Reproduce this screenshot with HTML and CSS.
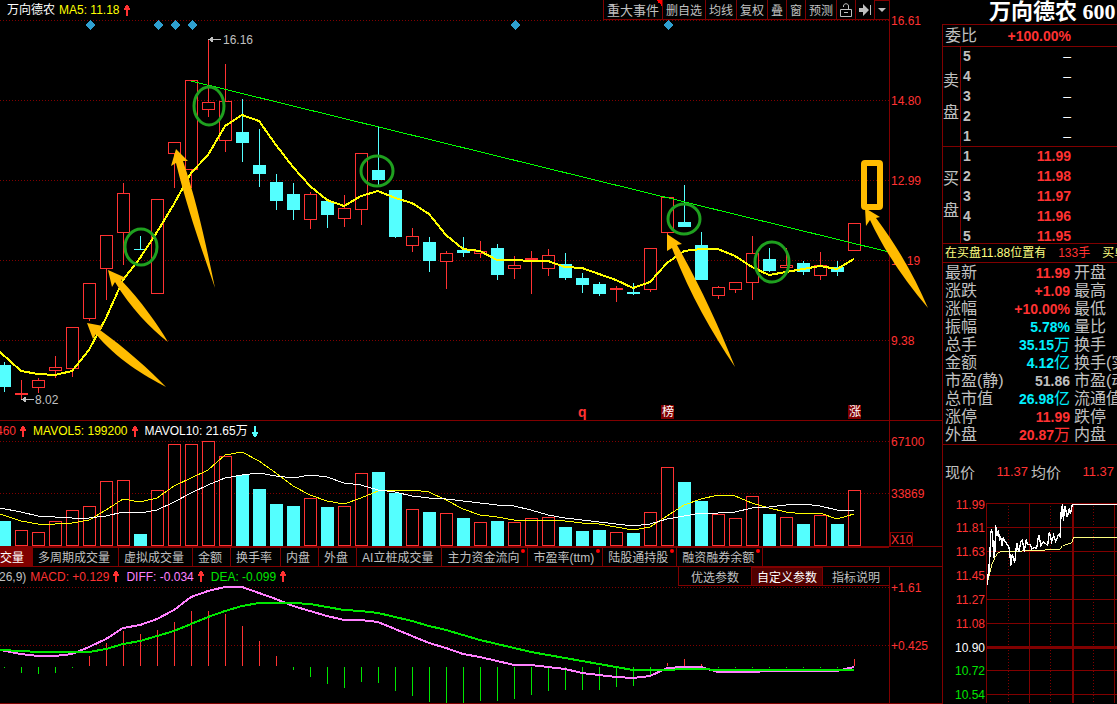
FILE: index.html
```html
<!DOCTYPE html>
<html lang="zh-CN">
<head>
<meta charset="utf-8">
<title>万向德农</title>
<link rel="stylesheet" href="styles.css">
</head>
<body>
<svg class="defs" aria-hidden="true">
  <symbol id="up" viewBox="0 0 6 11"><path d="M2 0h2v1h1v2h1v2H4v6H2V5H0V3h1V1h1z"/></symbol>
  <symbol id="down" viewBox="0 0 6 11"><path d="M2 11h2v-1h1V8h1V6H4V0H2v6H0v2h1v2h1z"/></symbol>
</svg>
<div class="app">
  <main class="charts">
    <section class="panel">
      <header class="panel-head">
        <div class="head-main">
          <div class="legend legend-price">
            <span class="white">万向德农</span>
            <span class="yellow">MA5: 11.18</span>
            <svg class="arrow red"><use href="#up"/></svg>
          </div>
          <nav class="toolbar">
            <button class="tool tool-events">重大事件</button>
            <button class="tool">删自选</button>
            <button class="tool">均线</button>
            <button class="tool">复权</button>
            <button class="tool">叠</button>
            <button class="tool">窗</button>
            <button class="tool">预测</button>
            <button class="tool" aria-label="解锁"><svg class="icon" viewBox="0 0 12 14"><path d="M.5 6.500h11v7H.5zM3.500 4V3c0-3 5-3 5 0v3.500" fill="none" stroke="#c0c0c0"/><path d="M4 9h4v1H4z" fill="#c0c0c0"/></svg></button>
            <button class="tool" aria-label="右移"><svg class="icon" viewBox="0 0 12 14"><path d="M0 5h4V1l6 6-6 6V9H0zM11 2h1v10h-1z" fill="#c0c0c0"/></svg></button>
            <button class="tool tool-more" aria-label="更多"><svg class="icon-small" viewBox="0 0 8 4"><path d="M0 0h8L4 4z" fill="#c0c0c0"/></svg></button>
          </nav>
        </div>
      </header>
      <svg class="plot" viewBox="0 20 942 401">
        <g class="grid">
          <path d="M0 20.500H889M0 100.500H889M0 180.500H889M0 260.500H889M0 340.500H889"/>
        </g>
        <path class="frame" d="M889.500 20V420M0 420.500H942"/>
        <g id="diamonds"></g>
        <g class="axis">
          <text x="891" y="25">16.61</text>
          <text x="891" y="105">14.80</text>
          <text x="891" y="185">12.99</text>
          <text x="891" y="265">11.19</text>
          <text x="891" y="345">9.38</text>
        </g>
        <g id="candles"></g>
        <polyline class="trend" points="191,81 889,252"/>
        <polyline id="ma5" class="ma5"/>
        <g class="note">
          <path d="M212 39.500h9M24 399.500h10"/>
          <path class="note-tip" d="M208 39.500l5-3v6zM21 399.500l5-3v6z"/>
          <text x="223" y="44">16.16</text>
          <text x="35" y="404">8.02</text>
        </g>
        <g class="ring">
          <ellipse cx="209" cy="106" rx="15" ry="19"/>
          <ellipse cx="141" cy="247" rx="16" ry="18"/>
          <ellipse cx="377" cy="171" rx="16" ry="15"/>
          <ellipse cx="684" cy="219" rx="16" ry="15"/>
          <ellipse cx="772" cy="262" rx="17" ry="20"/>
        </g>
        <g class="pointer">
          <path d="M87 323 103 326 100 330 C125 348 150 370 166 387 C145 376 115 358 96 334 L93 339z"/>
          <path d="M108 270 126 278 121 280 C142 302 158 325 168 342 C150 328 130 307 115 282 L112 287z"/>
          <path d="M176 149 188 161 183 161 C198 205 207 250 215 288 C202 250 187 208 176 163 L171 166z"/>
          <path d="M667 234 682 244 677 245 C698 282 718 324 735 367 C710 330 688 290 672 248 L667 251z"/>
          <path d="M865 208 880 217 876 218 C900 250 916 280 928 308 C906 282 886 254 870 220 L866 226z"/>
        </g>
        <rect class="target" x="864" y="163" width="16" height="44" rx="1"/>
        <g class="badges">
          <text class="q" x="578" y="417">q</text>
          <rect x="661" y="405" width="13" height="14"/><text x="662" y="416">榜</text>
          <rect x="848" y="405" width="13" height="14"/><text x="849" y="416">涨</text>
        </g>
      </svg>
    </section>

    <section class="panel">
      <header class="panel-head">
        <div class="head-main head-ruled">
          <div class="legend legend-volume">
            <span class="red">460</span><svg class="arrow red"><use href="#up"/></svg>
            <span class="yellow">MAVOL5: 199200</span><svg class="arrow red"><use href="#up"/></svg>
            <span class="white">MAVOL10: 21.65万</span><svg class="arrow cyan"><use href="#down"/></svg>
          </div>
        </div>
      </header>
      <svg class="plot" viewBox="0 441 942 107">
        <g class="grid"><path d="M0 441.500H889M0 493.500H889"/></g>
        <path class="frame" d="M889.500 441V546M0 546.500H942"/>
        <path class="frame" d="M0 547.500H889M890.500 546V532.500H912.500V546"/>
        <g id="volumes"></g>
        <polyline id="mavol5" class="vol5"/>
        <polyline id="mavol10" class="vol10"/>
        <g class="axis">
          <text x="891" y="446">67100</text>
          <text x="891" y="498">33869</text>
          <text x="891" y="544">X10</text>
        </g>
      </svg>
    </section>

    <nav class="tabs">
      <button class="tab tab-on">交量</button>
      <button class="tab">多周期成交量</button>
      <button class="tab">虚拟成交量</button>
      <button class="tab">金额</button>
      <button class="tab">换手率</button>
      <button class="tab">内盘</button>
      <button class="tab">外盘</button>
      <button class="tab">AI立桩成交量</button>
      <button class="tab tab-new">主力资金流向</button>
      <button class="tab tab-new">市盈率(ttm)</button>
      <button class="tab tab-new">陆股通持股</button>
      <button class="tab tab-new">融资融券余额</button>
    </nav>

    <section class="panel">
      <header class="panel-head">
        <div class="head-main head-ruled head-macd">
          <div class="legend legend-macd">
            <span class="grey">26,9)</span>
            <span class="red">MACD: +0.129</span><svg class="arrow red"><use href="#up"/></svg>
            <span class="violet">DIFF: -0.034</span><svg class="arrow red"><use href="#up"/></svg>
            <span class="green">DEA: -0.099</span><svg class="arrow red"><use href="#up"/></svg>
          </div>
          <nav class="params">
            <button class="param">优选参数</button>
            <button class="param param-on">自定义参数</button>
            <button class="param">指标说明</button>
          </nav>
        </div>
      </header>
      <svg class="plot" viewBox="0 586 942 118">
        <g class="grid"><path d="M0 587.500H889M0 645.500H889"/></g>
        <path class="frame" d="M889.500 586V703M0 703.500H942"/>
        <g id="macd"></g>
        <polyline id="diff" class="diff"/>
        <polyline id="dea" class="dea"/>
        <g class="axis">
          <text x="891" y="592">+1.61</text>
          <text x="891" y="650">+0.425</text>
        </g>
      </svg>
    </section>
  </main>

  <aside class="quote">
    <h1 class="name">万向德农 600</h1>
    <div class="quote-body">
      <div class="ratio"><span>委比</span><b class="red">+100.00%</b></div>
      <div class="book">
        <div class="side"><span>卖</span><span>盘</span></div>
        <table class="orders">
          <tr><th>5</th><td class="empty">–</td></tr>
          <tr><th>4</th><td class="empty">–</td></tr>
          <tr><th>3</th><td class="empty">–</td></tr>
          <tr><th>2</th><td class="empty">–</td></tr>
          <tr><th>1</th><td class="empty">–</td></tr>
        </table>
      </div>
      <div class="book book-buy">
        <div class="side"><span>买</span><span>盘</span></div>
        <table class="orders">
          <tr><th>1</th><td class="red">11.99</td></tr>
          <tr><th>2</th><td class="red">11.98</td></tr>
          <tr><th>3</th><td class="red">11.97</td></tr>
          <tr><th>4</th><td class="red">11.96</td></tr>
          <tr><th>5</th><td class="red">11.95</td></tr>
        </table>
      </div>
      <p class="ticker"><span>在买盘11.88位置有</span><span class="red">133手</span><span>买单</span></p>
      <table class="stats">
        <tr><th>最新</th><td class="red">11.99</td><th>开盘</th></tr>
        <tr><th>涨跌</th><td class="red">+1.09</td><th>最高</th></tr>
        <tr><th>涨幅</th><td class="red">+10.00%</td><th>最低</th></tr>
        <tr><th>振幅</th><td class="aqua">5.78%</td><th>量比</th></tr>
        <tr><th>总手</th><td class="aqua">35.15<i>万</i></td><th>换手</th></tr>
        <tr><th>金额</th><td class="aqua">4.12<i>亿</i></td><th>换手(实)</th></tr>
        <tr><th>市盈(静)</th><td class="grey">51.86</td><th>市盈(动)</th></tr>
        <tr><th>总市值</th><td class="aqua">26.98<i>亿</i></td><th>流通值</th></tr>
        <tr><th>涨停</th><td class="red">11.99</td><th>跌停</th></tr>
        <tr><th>外盘</th><td class="red">20.87<i>万</i></td><th>内盘</th></tr>
      </table>
      <div class="prices">
        <span>现价</span><span class="price red">11.37</span>
        <span>均价</span><span class="price red">11.37</span>
      </div>
      <svg class="plot" viewBox="943 491 174 213">
        <path class="frame" d="M986 504.500H1117M986 528.500H1117M986 552.500H1117M986 576.500H1117M986 600.500H1117M986 624.500H1117M986 671.500H1117M986 695.500H1117M986.500 504V704M1029.500 504V704M1114.500 504V704"/>
        <path class="grid" d="M1008.500 504V704M1050.500 504V704M1093.500 504V704"/>
        <path class="frame frame-mid" d="M986 648.500H1117"/>
        <path class="frame frame-noon" d="M1073 504V704"/>
        <g class="axis axis-end">
          <text x="985" y="510">11.99</text>
          <text x="985" y="533">11.81</text>
          <text x="985" y="557">11.63</text>
          <text x="985" y="581">11.45</text>
          <text x="985" y="605">11.27</text>
          <text x="985" y="629">11.08</text>
          <text class="base" x="985" y="653">10.90</text>
          <text class="low" x="985" y="676">10.72</text>
          <text class="low" x="985" y="700">10.54</text>
        </g>
        <g transform="translate(940 450) scale(.33333)">
          <polyline class="average" points="142,400 150,370 156,345 165,325 175,310 190,307 250,306 300,304 360,300 368,290 390,283 397,280 400,265 531,265"/>
          <polyline class="intraday" points="142,407 147,345 148,372 152,250 155,241 158,262 161,327 163,290 164,325 167,229 171,262 175,243 179,275 182,262 186,290 190,266 196,278 202,288 206,290 210,318 212,352 217,315 224,343 228,300 231,281 236,310 243,278 247,273 253,310 258,272 262,285 270,287 276,300 283,295 290,298 296,257 303,290 310,278 318,285 323,290 328,248 335,278 341,258 347,278 355,258 360,262 364,180 368,165 370,217 375,170 382,205 388,178 391,195 397,167 531,167"/>
        </g>
      </svg>
    </div>
  </aside>
</div>
<script src="charts.js"></script>
</body>
</html>
```

FILE: styles.css
```css
* { box-sizing: border-box; }

body {
  margin: 0;
  background: #000;
  color: #c0c0c0;
  font-family: "Liberation Sans", "Noto Sans CJK SC", sans-serif;
  font-size: 12px;
}

button {
  margin: 0;
  padding: 0;
  border: 0;
  background: none;
  color: inherit;
  font: inherit;
  white-space: nowrap;
}

.defs { display: none; }

.app {
  display: grid;
  grid-template-columns: minmax(0, 1fr) 175px;
  min-height: 100vh;
  overflow: hidden;
}

.red { color: #ff3232; }
.yellow { color: #ff0; }
.white { color: #fff; }
.grey { color: #c0c0c0; }
.cyan { color: #54ffff; }
.aqua { color: #00f0ff; }
.violet { color: #ff80ff; }
.green { color: #00e600; }

/* Panels */
.panel-head {
  display: grid;
  grid-template-columns: minmax(0, 890fr) 52fr;
}

.head-main {
  display: flex;
  justify-content: space-between;
  height: 20px;
  overflow: hidden;
}

.head-ruled { border-right: 1px solid #800000; }
.head-macd { height: 19px; }

.legend {
  display: flex;
  align-items: center;
  gap: 4px;
  line-height: 20px;
  white-space: nowrap;
}

.legend-price { padding-left: 7px; }
.legend-volume { margin-left: -4px; }
.legend-volume .arrow, .legend-macd .arrow { margin-right: 3px; }
.legend-macd { margin-left: -1px; }

.arrow {
  width: 6px;
  height: 11px;
  fill: currentColor;
  shape-rendering: crispEdges;
}

.plot {
  display: block;
  width: 100%;
  height: auto;
  overflow: visible;
  shape-rendering: crispEdges;
}

/* Toolbar */
.toolbar { display: flex; border-left: 1px solid #800000; }

.tool {
  display: flex;
  align-items: center;
  padding: 0 3px;
  border-right: 1px solid #800000;
  border-bottom: 1px solid #800000;
}

.tool-events {
  font-size: 13px;
  background: linear-gradient(45deg, transparent 50%, #f00 50%) top right / 6px 6px no-repeat;
}

.tool-more { border-top: 1px solid #800000; }
.icon { flex: none; width: 12px; height: 14px; }
.icon-small { flex: none; width: 8px; height: 4px; }

/* Indicator tabs */
.tabs {
  display: flex;
  height: 19px;
  border-bottom: 1px solid #800000;
}

.tab {
  position: relative;
  padding: 0 8px 2px 5px;
  border-right: 1px solid #800000;
}

.tab-on { padding-left: 0; background: #800000; color: #fff; }

.tab-new::after {
  content: "";
  position: absolute;
  top: 1px;
  right: 2px;
  width: 4px;
  height: 4px;
  border-radius: 50%;
  background: #f00;
}

.params { display: flex; border-left: 1px solid #800000; }

.param {
  width: 72px;
  border-bottom: 1px solid #800000;
}

.param:last-child { width: 66px; }

.param-on {
  border: 1px solid #800000;
  background: #500000;
  color: #fff;
}

/* Chart marks */
.grid path, path.grid { fill: none; stroke: #800000; stroke-dasharray: 1 2; }
.frame { fill: none; stroke: #800000; }
.frame-mid { stroke-width: 3; }
.frame-noon { stroke-width: 2; }
.axis { fill: #ff3232; }
.axis-end { text-anchor: end; }
.base { fill: #fff; }
.low { fill: #00e600; }
.diamond { fill: #2f9fd0; }
.rise { fill: #000; stroke: #ff3232; }
.fall { fill: #54ffff; }
.wick-rise { fill: #ff3232; }
.bar-up { fill: #ff3232; }
.bar-down { fill: #00e600; }
polyline { fill: none; }
.trend { stroke: #0f0; }
.ma5 { stroke: #ff0; stroke-width: 2; }
.vol5 { stroke: #ff0; }
.vol10 { stroke: #fff; }
.diff { stroke: #ff80ff; stroke-width: 2; }
.dea { stroke: #00e600; stroke-width: 2; }
.average { stroke: #ffff80; stroke-width: 3; }
.intraday { stroke: #fff; stroke-width: 4; }
.note { fill: #c0c0c0; stroke: none; }
.note path { stroke: #c0c0c0; }
.note .note-tip { stroke: none; }
.ring { fill: none; stroke: #1fa01f; stroke-width: 3; shape-rendering: auto; }
.pointer { fill: #ffbc00; shape-rendering: auto; }
.target { fill: none; stroke: #ffbc00; stroke-width: 6; shape-rendering: auto; }
.badges { fill: #fff; }
.badges rect { fill: #800000; }
.badges .q { fill: #ff3232; font-size: 14px; font-weight: bold; }

/* Quote column */
.name {
  margin: 0;
  padding-left: 47px;
  height: 24px;
  color: #fff;
  font: bold 22px/24px "Liberation Serif", "Noto Sans CJK SC", serif;
  white-space: nowrap;
}

.quote { min-width: 0; overflow: hidden; }

.quote-body {
  min-height: calc(100vh - 24px);
  border-top: 1px solid #800000;
  border-left: 1px solid #800000;
  font-size: 16px;
}

.ratio {
  display: flex;
  justify-content: space-between;
  height: 22px;
  padding: 0 46px 0 2px;
  border-bottom: 1px solid #800000;
  line-height: 22px;
}

.ratio b { font-size: 14px; }

.book {
  display: flex;
  height: 100px;
  border-bottom: 1px solid #800000;
}

.book-buy { height: 97px; }

.side {
  display: flex;
  flex-direction: column;
  justify-content: center;
  gap: 8px;
  width: 18px;
  border-right: 1px solid #800000;
  line-height: 24px;
}

.orders {
  flex: 1;
  align-self: flex-start;
  margin-top: -1px;
  border-collapse: collapse;
  font-size: 14px;
  font-weight: bold;
  line-height: 20px;
}

.orders th { padding: 0 0 0 2px; text-align: left; }
.orders td { padding: 0 46px 0 0; text-align: right; }
.orders .empty { color: #fff; font-weight: normal; }

.ticker {
  display: flex;
  gap: 12px;
  margin: 0;
  padding-left: 2px;
  border-bottom: 1px solid #800000;
  color: #ffff80;
  font-size: 12px;
  line-height: 18px;
  white-space: nowrap;
}

.stats {
  width: 100%;
  margin-top: 1px;
  table-layout: fixed;
  border-collapse: collapse;
  line-height: 18px;
  white-space: nowrap;
}

.stats tr { height: 18px; }
.stats th { padding: 0 0 0 2px; font-weight: normal; text-align: left; }
.stats th:first-child { width: 59px; }
.stats td { width: 68px; padding: 0; font-size: 14px; font-weight: bold; text-align: right; }
.stats th + td + th { padding-left: 4px; }
.stats i { font-size: 16px; font-style: normal; font-weight: normal; line-height: 16px; }

.prices {
  display: flex;
  align-items: center;
  gap: 3px;
  height: 46px;
  padding: 8px 0 0 2px;
  border-top: 1px solid #800000;
  font-size: 15px;
}

.price { width: 50px; font-size: 13px; text-align: right; }
.quote .plot { font-size: 12px; }
```

FILE: charts.js
```js
const NS = "http://www.w3.org/2000/svg";
const STEP = 17;
const center = i => 4 + STEP * i;

function add(parent, tag, attrs) {
  const el = document.createElementNS(NS, tag);
  for (const key in attrs) el.setAttribute(key, attrs[key]);
  parent.appendChild(el);
}

function rect(parent, cls, x, y, width, height) {
  add(parent, "rect", { class: cls, x, y, width, height });
}

// direction, high, body top, body bottom, low
const candles = [
  [0,362,365,387,392],[1,380,393,395,399],[1,378,380,388,393],[1,356,367,371,378],
  [1,327,327,369,377],[1,283,283,319,321],[1,235,235,269,300],[1,183,193,233,265],
  [0,236,249,250,250],[1,199,199,294,294],[1,142,142,154,188],[1,80,80,170,188],
  [1,40,102,110,117],[1,64,101,141,152],[0,99,132,143,162],[0,129,165,174,187],
  [0,174,182,201,210],[0,183,194,210,220],[1,192,194,220,229],[0,201,201,215,228],
  [1,195,208,219,227],[1,153,153,210,225],[0,126,170,180,185],[0,190,190,237,238],
  [1,228,236,246,252],[0,237,242,261,272],[1,251,253,262,289],[0,237,250,253,257],
  [1,241,251,254,258],[0,244,248,275,280],[1,256,265,269,279],[1,251,258,260,294],
  [1,249,255,269,276],[0,253,264,278,280],[0,273,278,285,293],[0,282,284,294,296],
  [1,286,288,290,302],[0,283,292,294,295],[1,248,248,290,292],[1,197,197,233,237],
  [0,185,222,227,227],[0,232,245,280,280],[1,286,287,296,299],[1,282,282,290,293],
  [1,236,253,283,300],[0,248,259,271,272],[1,248,265,268,268],[0,261,263,272,275],
  [1,252,265,276,280],[0,261,267,272,276],[1,223,223,251,251]
];

const volumes = [521,530,532,521,510,506,481,480,534,490,444,444,441,456,475,489,504,506,
  498,507,506,473,472,493,509,512,513,518,522,521,522,518,517,527,531,530,532,533,512,467,
  482,501,514,518,496,514,517,524,515,524,490];

const macd = [668,673,674,673,668,656,643,631,634,630,622,611,611,614,626,641,656,670,677,
  684,688,682,683,691,696,702,703,703,701,701,699,695,691,690,690,690,687,686,676,663,659,
  664,668,668,668,668,668,668,668,668,659];

const candleLayer = document.getElementById("candles");
const volumeLayer = document.getElementById("volumes");
const macdLayer = document.getElementById("macd");

function bar(layer, rising, x, top, bottom) {
  if (rising) rect(layer, "rise", x - 5.5, top + 0.5, 12, bottom - top - 1);
  else rect(layer, "fall", x - 6, top, 13, bottom - top);
}

candles.forEach(([rising, high, top, bottom, low], i) => {
  const x = center(i);
  rect(candleLayer, rising ? "wick-rise" : "fall", x, high, 1, low - high);
  bar(candleLayer, rising, x, top, bottom);
  bar(volumeLayer, rising, x, volumes[i], 546);
  const value = macd[i];
  if (value < 667) rect(macdLayer, "bar-up", x, value, 1, 666 - value);
  else rect(macdLayer, "bar-down", x, 667, 1, value - 667);
});

[90, 158, 175, 192, 515, 668].forEach(x =>
  add(document.getElementById("diamonds"), "path", { class: "diamond", d: `M${x} 20l5 5-5 5-5-5z` }));

function line(id, start, values) {
  const points = values.map((y, i) => `${center(i + 1)},${y}`);
  document.getElementById(id).setAttribute("points", `0,${start} ${points.join(" ")}`);
}

line("ma5", 352, [371,374,375,371,350,318,280,258,232,204,173,155,126,115,121,145,167,186,
  200,206,196,191,198,203,214,235,249,251,260,260,261,261,267,268,274,280,288,282,263,251,
  249,249,256,267,275,272,269,266,269,259]);
line("mavol5", 514, [521,524,524,523,520,510,499,502,498,486,478,470,455,452,461,473,486,495,
  501,504,498,491,490,490,492,500,509,515,517,520,520,520,521,523,524,527,530,527,516,505,
  499,495,496,503,508,512,514,513,519,514]);
line("mavol10", 508, [512,516,517,518,518,516,512,513,510,502,493,485,478,475,473,476,478,475,
  477,483,485,490,492,496,498,499,501,503,505,506,510,515,518,520,522,524,526,524,519,516,
  513,513,512,508,507,505,504,506,510,511]);
line("diff", 650, [654,656,656,654,647,639,628,625,619,610,597,591,587,587,593,599,606,611,
  616,620,620,622,629,636,643,648,654,657,661,665,665,667,669,673,675,677,678,676,668,667,
  667,672,672,672,671,671,671,671,671,667]);
line("dea", 650, [651,652,652,652,652,649,644,641,636,631,624,617,611,606,603,603,603,604,
  607,610,611,613,617,621,626,630,635,640,644,648,652,655,658,661,664,667,670,670,670,669,
  669,670,670,670,670,670,670,670,670,670]);
```
